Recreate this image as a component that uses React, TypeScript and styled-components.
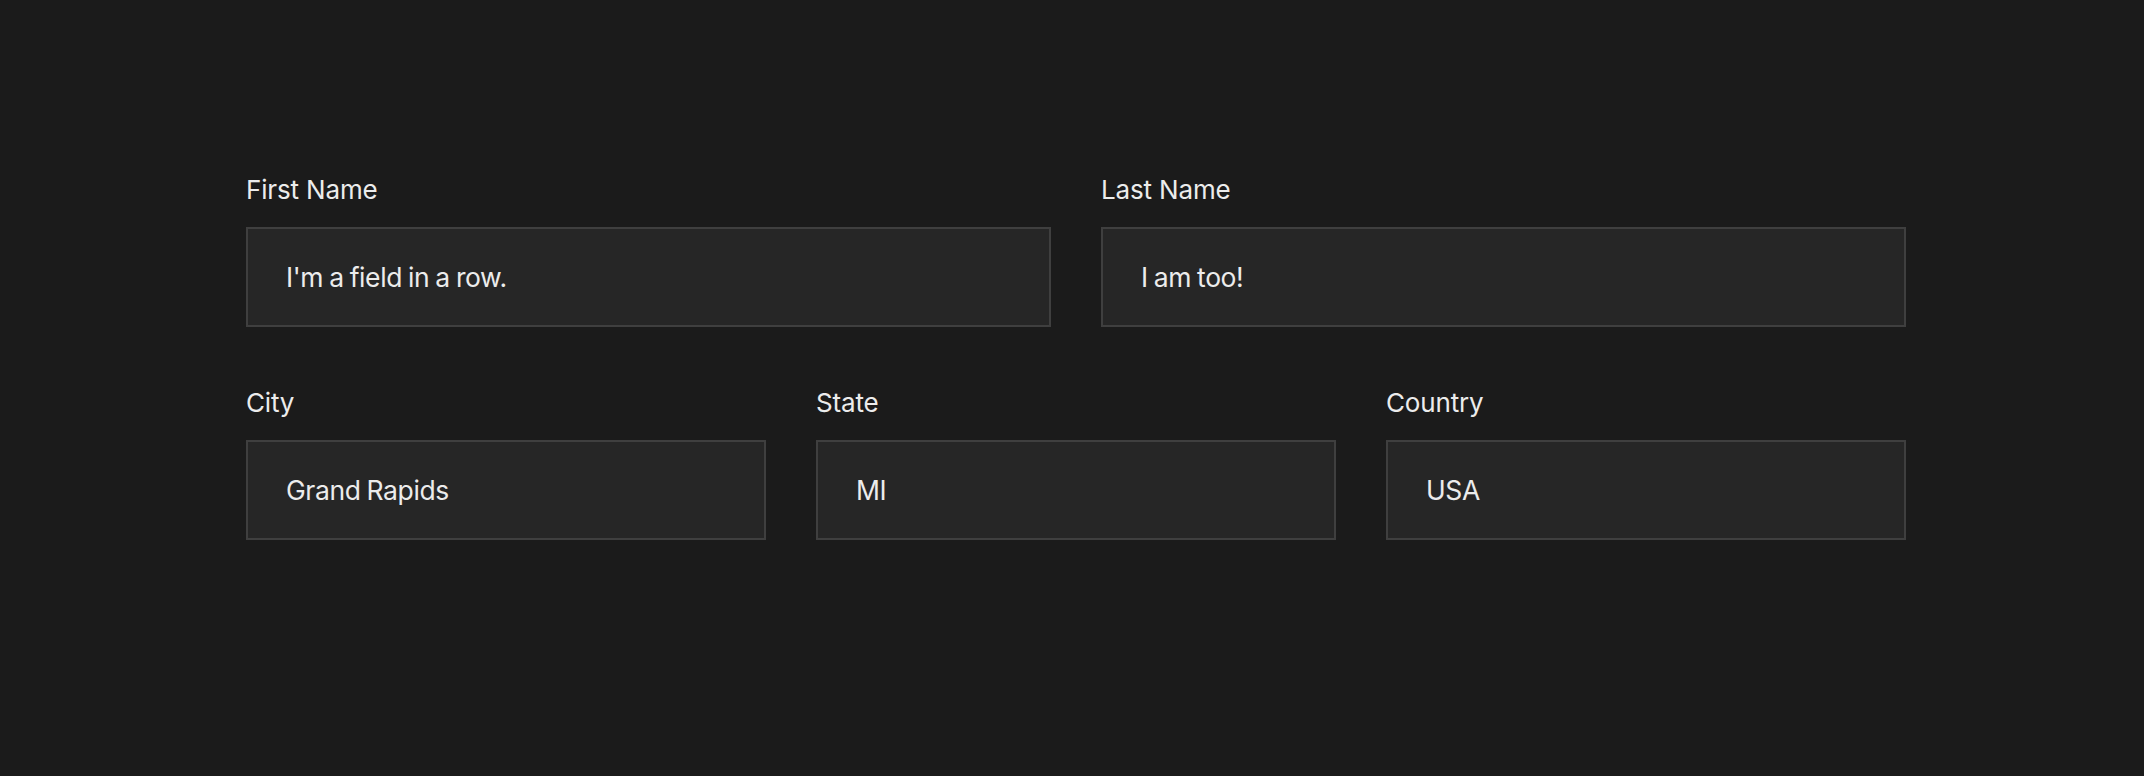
import React from "react";
import styled, { createGlobalStyle } from "styled-components";

const Global = createGlobalStyle`
  html, body {
    margin: 0;
    padding: 0;
    background: #1b1b1b;
  }
  body {
    font-family: Inter, "Noto Sans", sans-serif;
    color: #ececec;
  }
`;

const Page = styled.main`
  min-height: 776px;
  padding: 174px 238px 0 246px;
  box-sizing: border-box;
  display: flex;
  flex-direction: column;
  gap: 60px;
`;

const Row = styled.div<{ $cols: number }>`
  display: grid;
  grid-template-columns: repeat(${(p) => p.$cols}, 1fr);
  column-gap: 50px;
`;

const Field = styled.label`
  display: flex;
  flex-direction: column;
  gap: 22px;
`;

const Label = styled.span`
  font-size: 26px;
  line-height: 31px;
  font-weight: 400;
  color: #ececec;
  letter-spacing: -0.15px;
`;

const Input = styled.input`
  box-sizing: border-box;
  width: 100%;
  height: 100px;
  margin: 0;
  padding: 0 38px;
  background: #262626;
  border: 2px solid #3f3f3f;
  border-radius: 0;
  outline: none;
  font-family: Inter, "Noto Sans", sans-serif;
  font-size: 26.5px;
  color: #ececec;
  letter-spacing: -0.4px;
  word-spacing: -1px;
`;

const fields: { label: string; value: string }[][] = [
  [
    { label: "First Name", value: "I'm a field in a row." },
    { label: "Last Name", value: "I am too!" },
  ],
  [
    { label: "City", value: "Grand Rapids" },
    { label: "State", value: "MI" },
    { label: "Country", value: "USA" },
  ],
];

export default function App() {
  return (
    <>
      <Global />
      <Page>
        {fields.map((row, i) => (
          <Row key={i} $cols={row.length}>
            {row.map((f) => (
              <Field key={f.label}>
                <Label>{f.label}</Label>
                <Input type="text" defaultValue={f.value} />
              </Field>
            ))}
          </Row>
        ))}
      </Page>
    </>
  );
}
